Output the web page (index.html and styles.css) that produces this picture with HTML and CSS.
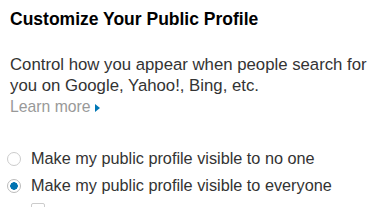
FILE: index.html
```html
<!DOCTYPE html>
<html>

<head>
    <title>Public Profile</title>

    <link rel="stylesheet" href="styles.css">

</head>

<body>
    <main class="profile">
        <h2 class="title">Customize Your Public Profile</h2>

        <p class="intro">
            Control how you appear when people search for<br>
            you on Google, Yahoo!, Bing, etc.
            <br>
            <a class="learn" href="#">Learn more <span class="arrow"></span></a>
        </p>

        <ul class="options">
            <li class="option">
                <span class="radio"></span>
                <span>Make my public profile visible to no one</span>
            </li>
            <li class="option">
                <span class="radio checked"></span>
                <span>Make my public profile visible to everyone</span>
            </li>
            <li class="option sub">
                <span class="check"></span>
            </li>
        </ul>
    </main>
</body>

</html>
```

FILE: styles.css
```css
body {
    margin: 0;
    background: #fff;
    color: #333;

    font-family: "Liberation Sans", Arial, sans-serif;
    font-size: 16.75px;
}

.profile {
    padding: 0 10px;
    height: 207px;
    overflow: hidden;
}

.title {
    margin: 0;
    padding-top: 9px;

    font-size: 17.5px;
    font-weight: bold;
    line-height: 20px;
    color: #000;
}

.intro {
    margin: 0;
    padding-top: 25px;

    line-height: 21px;
    white-space: nowrap;
}

.learn {
    color: #999;
    font-size: 15.75px;
    text-decoration: none;
}

.arrow {
    display: inline-block;
    width: 0;
    height: 0;

    border-top: 4px solid transparent;
    border-bottom: 4px solid transparent;
    border-left: 5px solid #0077b5;
}

.options {
    margin: 0;
    padding: 28px 0 0 0;
    list-style: none;

    font-size: 16.25px;
}

.option {
    display: flex;
    align-items: center;
    gap: 10px;

    height: 27px;
    margin-left: -3px;
}

.radio {
    box-sizing: border-box;
    width: 14px;
    height: 14px;

    border: 1px solid #ccc;
    border-radius: 50%;
    background: #fff;
}

.radio.checked {
    border-color: #bbb;
    background: radial-gradient(circle, #0073b1 0 3.5px, #fff 4px);
}

.sub {
    padding-left: 24px;
    align-items: flex-start;
}

.check {
    box-sizing: border-box;
    width: 14px;
    height: 14px;
    margin-top: 4px;

    border: 1px solid #ccc;
    border-radius: 2px;
}
```
